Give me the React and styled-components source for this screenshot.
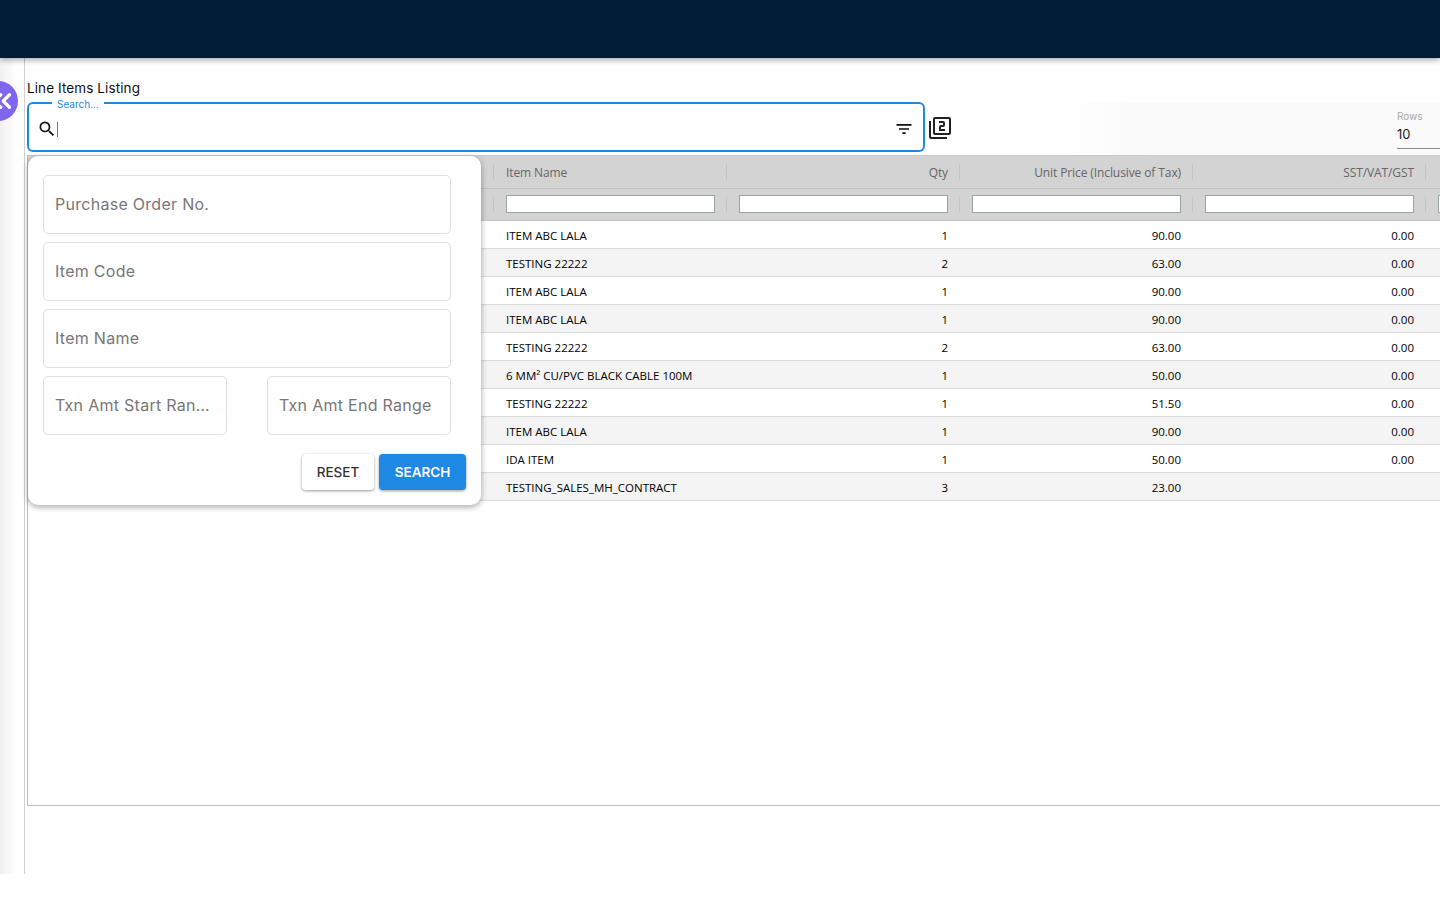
import React from 'react';
import styled, { createGlobalStyle } from 'styled-components';
import { MdSearch, MdFilterList, MdOutlineFilter2 } from 'react-icons/md';
import { ChevronsLeft } from 'lucide-react';

const GlobalStyle = createGlobalStyle`
  html, body {
    margin: 0;
    height: 100%;
    overflow: hidden;
    background: #fff;
    font-family: "Inter", "Liberation Sans", sans-serif;
  }
  * { box-sizing: border-box; }
`;

const Page = styled.div`
  width: 1440px;
  height: 900px;
  display: flex;
  flex-direction: column;
  overflow: hidden;
`;

const TopBar = styled.header`
  height: 58px;
  flex: none;
  background: #001c36;
  box-shadow: 0 2px 6px rgba(0, 0, 0, 0.35);
  position: relative;
  z-index: 3;
`;

const Body = styled.div`
  display: flex;
  flex: 1;
  align-items: flex-start;
`;

const Sidebar = styled.aside`
  width: 25px;
  height: 816px;
  flex: none;
  border-right: 1px solid #cfcfcf;
  background: linear-gradient(90deg, #f1f1f1, #fff 70%);
`;

const CollapseButton = styled.div`
  position: absolute;
  left: -22px;
  top: 81px;
  width: 40px;
  height: 40px;
  border-radius: 50%;
  background: #7e67ee;
  color: #fff;
  display: flex;
  align-items: center;
  justify-content: center;
  padding-left: 7px;
  overflow: hidden;
  z-index: 4;
`;

const Main = styled.main`
  flex: 1;
  min-width: 0;
  padding: 21px 0 0 2px;
  position: relative;
`;

const Title = styled.div`
  height: 23px;
  font-size: 13.5px;
  line-height: 19px;
  color: #111;
  letter-spacing: 0.1px;
`;

const Toolbar = styled.div`
  display: flex;
  align-items: center;
  height: 53px;
  background: linear-gradient(90deg, #fff 72%, #fafafa 80%);
`;

const SearchField = styled.div`
  position: relative;
  width: 898px;
  height: 50px;
  flex: none;
  margin-top: -3px;
  border: 2px solid #1e88e5;
  border-radius: 6px;
  background: #fff;
  display: flex;
  align-items: center;
  padding: 4px 9px 0 8px;
`;

const FloatingLabel = styled.span`
  position: absolute;
  left: 23px;
  top: -6px;
  padding: 0 5px;
  background: #fff;
  font-size: 10px;
  line-height: 12px;
  color: #1e88e5;
`;

const Caret = styled.span`
  width: 1px;
  height: 15px;
  background: #1e88e5;
  margin: 0 auto 0 0;
`;

const LayersIcon = styled.div`
  margin: -2px 0 0 3px;
  display: flex;
  color: #222;
`;

const RowsControl = styled.div`
  margin-left: auto;
  width: 43px;
  height: 45px;
  border-bottom: 1px solid #8c8c8c;
  margin-top: -5px;
  display: flex;
  flex-direction: column;
`;

const RowsLabel = styled.span`
  font-size: 10px;
  line-height: 14px;
  margin-top: 5px;
  color: #a8a8a8;
`;

const RowsValue = styled.span`
  font-size: 13px;
  line-height: 22px;
  color: #222;
`;

const Grid = styled.div`
  height: 651px;
  border-left: 1px solid #bdbdbd;
  border-top: 1px solid #c9c9c9;
  border-bottom: 1px solid #bdbdbd;
  overflow: hidden;
  font-family: "Open Sans", "Liberation Sans", sans-serif;
  font-size: 11.5px;
`;

const Row = styled.div`
  display: grid;
  grid-template-columns: 466px 233px 233px 233px 233px 233px;
  height: ${props => props.$height}px;
  width: 1431px;
  align-items: center;
  background: ${props => props.$bg};
  border-bottom: 1px solid ${props => props.$line};
`;

const HeadCell = styled.div`
  height: 100%;
  display: flex;
  align-items: center;
  justify-content: ${props => (props.$right ? 'flex-end' : 'flex-start')};
  padding: ${props => (props.$filter ? '0 12px 2px' : '0 12px')};
  color: #666;
  font-size: 12px;
  font-weight: 500;
  letter-spacing: -0.1px;
  position: relative;
  white-space: nowrap;

  &::before {
    content: '';
    position: absolute;
    left: -1px;
    top: 8px;
    bottom: 8px;
    width: 1px;
    background: #c4c4c4;
  }
`;

const FilterInput = styled.input`
  width: 100%;
  height: 18px;
  border: 1px solid #95a5a6;
  background: #fff;
  padding: 0;
  outline: none;
`;

const Cell = styled.div`
  padding: 2px 12px 0;
  text-align: ${props => (props.$right ? 'right' : 'left')};
  color: #000;
  white-space: nowrap;
`;

const Popup = styled.div`
  position: absolute;
  left: 3px;
  top: 98px;
  width: 453px;
  height: 349px;
  background: #fff;
  border-radius: 10px;
  box-shadow: 0 2px 6px rgba(0, 0, 0, 0.35);
  padding: 19px 15px 0;
  z-index: 2;
`;

const Fields = styled.div`
  width: 408px;
  display: flex;
  flex-direction: column;
  gap: 8px;
`;

const FieldPair = styled.div`
  display: flex;
  justify-content: space-between;
`;

const Field = styled.input`
  width: ${props => (props.$half ? '184px' : '100%')};
  height: 59px;
  border: 1px solid #e0e0e0;
  border-radius: 5px;
  padding: 0 14px 2px 11px;
  font: 400 16px "Inter", "Liberation Sans", sans-serif;
  letter-spacing: 0.28px;
  background: #fff;
  outline: none;
  text-overflow: ellipsis;

  &::placeholder {
    color: #777;
    opacity: 1;
  }
`;

const Actions = styled.div`
  display: flex;
  justify-content: flex-end;
  gap: 5px;
  margin-top: 19px;
`;

const ActionButton = styled.button`
  height: 36px;
  width: ${props => (props.$primary ? '87px' : '72px')};
  border: none;
  border-radius: 4px;
  background: ${props => (props.$primary ? '#1e88e5' : '#fff')};
  color: ${props => (props.$primary ? '#fff' : '#333')};
  font: ${props => (props.$primary ? 600 : 500)} 13.5px "Inter", "Liberation Sans", sans-serif;
  box-shadow: 0 1px 3px rgba(0, 0, 0, 0.4);
  padding: 0;
`;

const columns = ['Item Name', 'Qty', 'Unit Price (Inclusive of Tax)', 'SST/VAT/GST'];

const items = [
  ['ITEM ABC LALA', '1', '90.00', '0.00'],
  ['TESTING 22222', '2', '63.00', '0.00'],
  ['ITEM ABC LALA', '1', '90.00', '0.00'],
  ['ITEM ABC LALA', '1', '90.00', '0.00'],
  ['TESTING 22222', '2', '63.00', '0.00'],
  ['6 MM² CU/PVC BLACK CABLE 100M', '1', '50.00', '0.00'],
  ['TESTING 22222', '1', '51.50', '0.00'],
  ['ITEM ABC LALA', '1', '90.00', '0.00'],
  ['IDA ITEM', '1', '50.00', '0.00'],
  ['TESTING_SALES_MH_CONTRACT', '3', '23.00', ''],
];

export default function App() {
  return (
    <Page>
      <GlobalStyle />
      <TopBar />
      <Body>
        <Sidebar />
        <CollapseButton>
          <ChevronsLeft size={30} strokeWidth={2.6} />
        </CollapseButton>
        <Main>
          <Title>Line Items Listing</Title>
          <Toolbar>
            <SearchField>
              <FloatingLabel>Search...</FloatingLabel>
              <MdSearch size={20} color="#111" />
              <Caret />
              <MdFilterList size={20} color="#111" />
            </SearchField>
            <LayersIcon>
              <MdOutlineFilter2 size={24} />
            </LayersIcon>
            <RowsControl>
              <RowsLabel>Rows</RowsLabel>
              <RowsValue>10</RowsValue>
            </RowsControl>
          </Toolbar>
          <Grid>
            <Row $height={33} $bg="#d3d3d3" $line="#bdc3c7">
              <HeadCell />
              {columns.map((name, i) => (
                <HeadCell key={name} $right={i > 0}>{name}</HeadCell>
              ))}
              <HeadCell />
            </Row>
            <Row $height={32} $bg="#d3d3d3" $line="#bdc3c7">
              <HeadCell $filter />
              {columns.map(name => (
                <HeadCell key={name} $filter><FilterInput /></HeadCell>
              ))}
              <HeadCell $filter><FilterInput /></HeadCell>
            </Row>
            {items.map((item, i) => (
              <Row key={i} $height={28} $bg={i % 2 ? '#f4f4f4' : '#fff'} $line="#dcdcdc">
                <span />
                {item.map((value, j) => (
                  <Cell key={j} $right={j > 0}>{value}</Cell>
                ))}
              </Row>
            ))}
          </Grid>
          <Popup>
            <Fields>
              <Field placeholder="Purchase Order No." />
              <Field placeholder="Item Code" />
              <Field placeholder="Item Name" />
              <FieldPair>
                <Field $half placeholder="Txn Amt Start Range" />
                <Field $half placeholder="Txn Amt End Range" />
              </FieldPair>
            </Fields>
            <Actions>
              <ActionButton>RESET</ActionButton>
              <ActionButton $primary>SEARCH</ActionButton>
            </Actions>
          </Popup>
        </Main>
      </Body>
    </Page>
  );
}
